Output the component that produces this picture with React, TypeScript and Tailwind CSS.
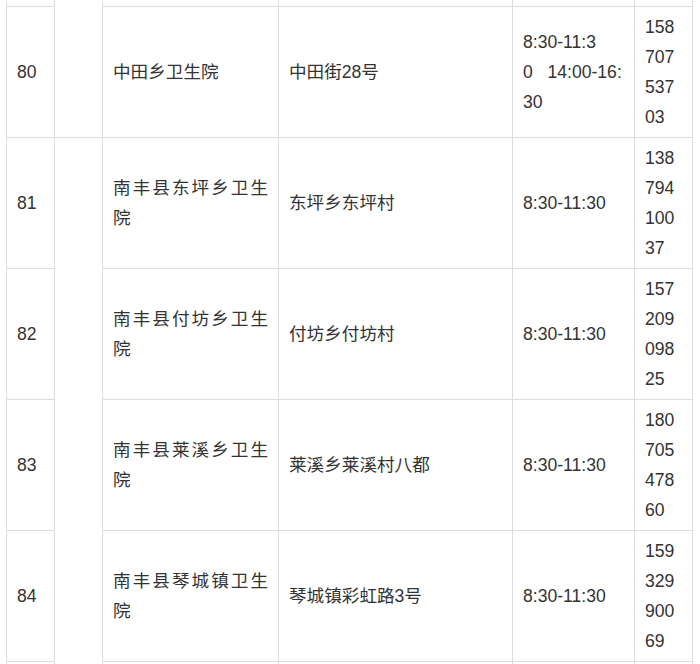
const rows = [
  {
    no: '80',
    name: '中田乡卫生院',
    addr: '中田街28号',
    time: ['8:30-11:3', '0   14:00-16:', '30'],
    phone: ['158', '707', '537', '03'],
  },
  {
    no: '81',
    name: '南丰县东坪乡卫生院',
    addr: '东坪乡东坪村',
    time: ['8:30-11:30'],
    phone: ['138', '794', '100', '37'],
  },
  {
    no: '82',
    name: '南丰县付坊乡卫生院',
    addr: '付坊乡付坊村',
    time: ['8:30-11:30'],
    phone: ['157', '209', '098', '25'],
  },
  {
    no: '83',
    name: '南丰县莱溪乡卫生院',
    addr: '莱溪乡莱溪村八都',
    time: ['8:30-11:30'],
    phone: ['180', '705', '478', '60'],
  },
  {
    no: '84',
    name: '南丰县琴城镇卫生院',
    addr: '琴城镇彩虹路3号',
    time: ['8:30-11:30'],
    phone: ['159', '329', '900', '69'],
  },
]

type Item = (typeof rows)[number]

const cell = 'border border-[#dddddd] px-[10px] py-[5px] align-middle'
const edge = 'border border-t-0 border-[#dddddd] p-0'

const Cells = ({ r }: { r: Item }) => (
  <>
    <td className={`${cell} text-justify`}>{r.name}</td>
    <td className={cell}>{r.addr}</td>
    <td className={`${cell} whitespace-pre`}>
      {r.time.map((t, i) => (
        <div key={i}>{t}</div>
      ))}
    </td>
    <td className={cell}>
      {r.phone.map((p, i) => (
        <div key={i}>{p}</div>
      ))}
    </td>
  </>
)

export default function App() {
  return (
    <div
      className="h-[664px] overflow-hidden bg-white pl-[6px] text-[17.6px] leading-[30px] text-[#333333]"
      style={{ fontFamily: '"Liberation Sans", "Noto Sans CJK SC", sans-serif' }}
    >
      <table className="table-fixed border-collapse">
        <colgroup>
          <col className="w-[48px]" />
          <col className="w-[48px]" />
          <col className="w-[176px]" />
          <col className="w-[234px]" />
          <col className="w-[122px]" />
          <col className="w-[58px]" />
        </colgroup>
        <tbody>
          {/* tail of the row above, scrolled off */}
          <tr className="h-[6px]">
            <td className={edge}></td>
            <td className={edge} rowSpan={2}></td>
            <td className={edge}></td>
            <td className={edge}></td>
            <td className={edge}></td>
            <td className={edge}></td>
          </tr>
          <tr className="h-[131px]">
            <td className={cell}>{rows[0].no}</td>
            <Cells r={rows[0]} />
          </tr>
          {rows.slice(1).map((r, i) => (
            <tr key={r.no} className="h-[131px]">
              <td className={cell}>{r.no}</td>
              {i === 0 && <td className={cell} rowSpan={5}></td>}
              <Cells r={r} />
            </tr>
          ))}
          <tr className="h-[131px]">
            <td className={cell}></td>
            <td className={cell}></td>
            <td className={cell}></td>
            <td className={cell}></td>
            <td className={cell}></td>
          </tr>
        </tbody>
      </table>
    </div>
  )
}
